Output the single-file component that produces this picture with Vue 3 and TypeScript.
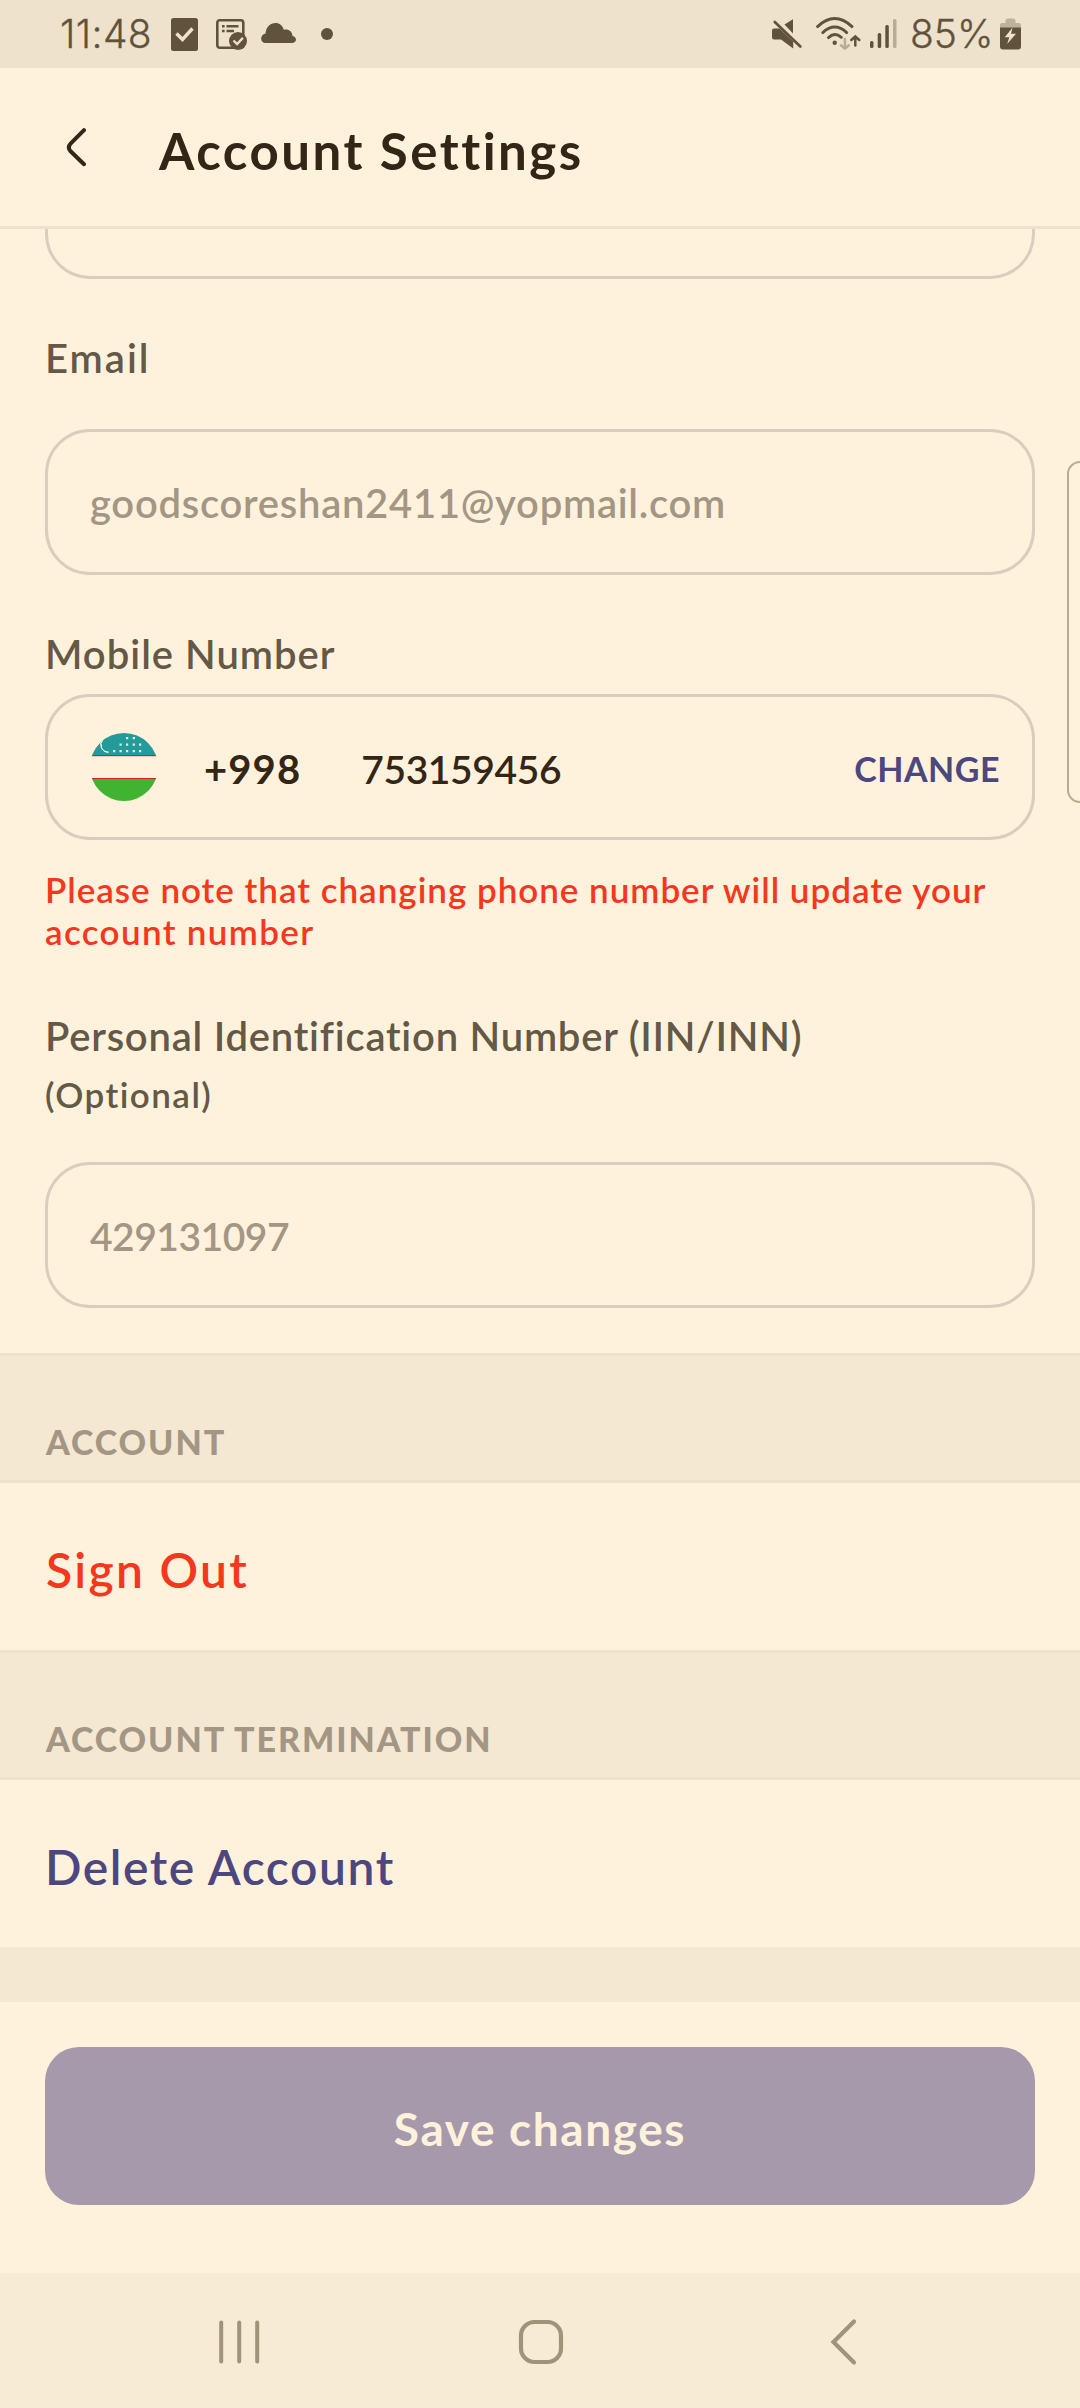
<script setup lang="ts">
const email = 'goodscoreshan2411@yopmail.com'
const phone = { code: '+998', number: '753159456' }
const pin = '429131097'

const signalBars = [
  { x: 0, h: 7, faded: false },
  { x: 7.7, h: 15, faded: false },
  { x: 15.3, h: 23, faded: false },
  { x: 23, h: 29, faded: true }
]

const flagStars = [
  [37, 5], [43.7, 5],
  [30.5, 11.5], [37, 11.5], [43.7, 11.5], [50, 11.5],
  [24, 18], [30.5, 18], [37, 18], [43.7, 18], [50, 18]
]
</script>

<template>
  <div class="screen">
    <div class="status">
      <span class="clock">11:48</span>
      <svg class="ic-check" width="27" height="33" viewBox="0 0 27 33">
        <rect width="27" height="33" rx="2.5" fill="#61533b" />
        <path d="M5.500 15.500L11.500 21.500L21.500 10.500" fill="none" stroke="#eee2cc" stroke-width="3.4" />
      </svg>
      <svg class="ic-list" width="31" height="31" viewBox="0 0 31 31">
        <rect x="1.3" y="1.3" width="26" height="27.5" rx="2.5" fill="none" stroke="#61533b" stroke-width="2.6" />
        <path d="M6 7.3h2.6M10.5 7.3h12M6 12h2.6M10.5 12h7.5" stroke="#61533b" stroke-width="2.5" />
        <circle cx="22" cy="22" r="9" fill="#61533b" />
        <path d="M17.500 21.500L21.100 25.100L26.900 18.900" fill="none" stroke="#eee2cc" stroke-width="2.3" />
      </svg>
      <svg class="ic-cloud" width="35" height="20" viewBox="0 0 35 20">
        <path d="M4 20C-1.200 19.500-1.200 11.500 4.500 10.500C5 4 9.500 0 14.500 0C18.500 0 21.500 2.300 22.800 6.800C27.500 5.800 31.300 8.500 31.500 12.900C36.300 13.800 36 19.600 31.500 20Z" fill="#61533b" />
      </svg>
      <i class="dot"></i>
      <span class="grow"></span>
      <svg class="ic-mute" width="30" height="30" viewBox="0 0 30 30">
        <path d="M12.500 5.500L21 .3V14.500ZM0 11.500Q0 9.500 2 9.500H7.500L21.200 22.500V29.500L9 20.500H2Q0 20.500 0 18Z" fill="#61533b" />
        <path d="M2.800 3L28.300 27.500" stroke="#61533b" stroke-width="2.700" stroke-linecap="round" />
      </svg>
      <svg class="ic-wifi" width="45" height="34" viewBox="0 0 45 34">
        <g fill="none" stroke="#61533b" stroke-width="2.900" stroke-linecap="round">
          <path d="M1.600 9.600Q18.700-6.400 36 9.600M6.800 15.600Q18.700 4.600 30.700 15.600M12.500 20.600Q18.700 14.700 25.300 20.300" />
          <path d="M39.300 28.500V20M35.300 23L39.300 19.500L43.300 23" stroke-width="2.500" />
          <path d="M28.900 22V31.500M24.900 28.300L28.900 31.700L32.900 28.300" stroke="#b8ac96" stroke-width="2.500" />
        </g>
        <circle cx="18.700" cy="25.700" r="2.200" fill="#61533b" />
      </svg>
      <svg class="ic-signal" width="27" height="29" viewBox="0 0 27 29">
        <rect v-for="b in signalBars" :key="b.x" :x="b.x" :y="29 - b.h" width="3.500" :height="b.h" rx="1.500" :fill="b.faded ? '#b8ac96' : '#61533b'" />
      </svg>
      <span class="percent">85%</span>
      <svg class="ic-battery" width="21" height="32" viewBox="0 0 21 32">
        <path d="M0 10V7Q0 5 2 5H5.500V3Q5.500 .5 8 .5H13Q15.500 .5 15.500 3V5H19Q21 5 21 7V10Z" fill="#beb29c" />
        <path d="M0 9.500H21V28.500Q21 31.500 18 31.500H3Q0 31.500 0 28.500Z" fill="#61533b" />
        <path d="M12.500 9.500L4.800 19.200H9.300L7.200 26L16 15.800H11Z" fill="#eee2cc" />
      </svg>
    </div>

    <header class="header">
      <svg class="back" width="20" height="39" viewBox="0 0 20 39">
        <path d="M18 2.200L4.600 15.700Q1 19.500 4.600 23.300L18 36.200" fill="none" stroke="#332617" stroke-width="4" stroke-linecap="round" />
      </svg>
      <h1 class="title">Account Settings</h1>
    </header>

    <main class="form">
      <div class="field clipped"></div>

      <label class="label email-label">Email</label>
      <div class="field"><span class="value email-value">{{ email }}</span></div>

      <label class="label mobile-label">Mobile Number</label>
      <div class="field phone">
        <svg class="flag" width="68" height="68" viewBox="0 0 68 68">
          <clipPath id="disc"><circle cx="34" cy="34" r="34" /></clipPath>
          <g clip-path="url(#disc)">
            <rect width="68" height="22" fill="#249b9b" />
            <rect y="22" width="68" height="1.200" fill="#d4202a" />
            <rect y="45" width="68" height="1.200" fill="#d4202a" />
            <rect y="46" width="68" height="22" fill="#40b330" />
            <path d="M14 6.500A8 7.500 0 0 0 19.500 19.200A7.500 7.500 0 0 1 14 6.500Z" fill="#fff2dc" stroke="#fff2dc" stroke-width="1" transform="translate(-1 0)" />
            <rect v-for="([x, y], i) in flagStars" :key="i" :x="x - 1" :y="y - 1" width="2.200" height="2.200" fill="#e8efe0" />
          </g>
        </svg>
        <span class="code">{{ phone.code }}</span>
        <span class="number">{{ phone.number }}</span>
        <span class="grow"></span>
        <button class="change" type="button">CHANGE</button>
      </div>
      <p class="warning"><span class="warning-first">Please note that changing phone number will update your</span><br /><span class="warning-rest">account number</span></p>

      <label class="label pin-label">Personal Identification Number (IIN/INN)</label>
      <span class="optional">(Optional)</span>
      <div class="field"><span class="value pin-value">{{ pin }}</span></div>
    </main>

    <h2 class="section">ACCOUNT</h2>
    <a class="row danger">Sign Out</a>
    <h2 class="section">ACCOUNT TERMINATION</h2>
    <a class="row link">Delete Account</a>
    <div class="gap"></div>

    <footer class="footer">
      <button class="save" type="button">Save changes</button>
    </footer>

    <nav class="nav">
      <svg class="recents" width="41" height="44" viewBox="0 0 41 44">
        <path d="M2.200 2.500V41.500M20.200 2.500V41.500M38.200 2.500V41.500" stroke="#a09379" stroke-width="4" stroke-linecap="round" />
      </svg>
      <svg class="home" width="46" height="46" viewBox="0 0 46 46">
        <rect x="3" y="3" width="40" height="40" rx="13.500" fill="none" stroke="#a09379" stroke-width="4.200" />
      </svg>
      <svg class="prev" width="28" height="48" viewBox="0 0 28 48">
        <path d="M24 3.500L3.500 24L24 44.500" fill="none" stroke="#a09379" stroke-width="4.200" stroke-linecap="round" />
      </svg>
    </nav>

    <i class="edge"></i>
  </div>
</template>

<style scoped>
.screen {
  position: relative;
  display: flex;
  flex-direction: column;
  width: 1080px;
  height: 2408px;
  overflow: hidden;
  background: #fff2dc;
  color: #332617;
  font-family: Lato, "Open Sans", sans-serif;
  font-weight: 600;
}
.grow { flex: 1; }
.status {
  display: flex;
  align-items: flex-start;
  height: 68px;
  background: #eee2cc;
  color: #61533b;
  font: 300 39px/68px Inter, Roboto, sans-serif;
  -webkit-text-stroke: 0.3px #61533b;
}
.status svg { display: block; flex: none; }
.clock { width: 111px; margin-left: 60px; letter-spacing: 0.4px; }
.ic-check { margin-top: 18px; }
.ic-list { margin: 19px 0 0 18px; }
.ic-cloud { margin: 23px 0 0 14px; }
.dot { width: 12px; height: 12px; margin: 28px 0 0 25px; border-radius: 50%; background: #61533b; }
.ic-mute { margin-top: 19px; }
.ic-wifi { margin: 17px 0 0 14px; }
.ic-signal { margin: 19px 0 0 9px; }
.percent { width: 90px; margin-left: 13px; }
.ic-battery { margin: 18px 59px 0 0; }

.header {
  display: flex;
  align-items: flex-start;
  height: 161px;
  border-bottom: 3px solid #eee2cc;
  box-sizing: border-box;
}
.back { margin: 60px 0 0 66px; }
.title {
  margin: 53px 0 0 73px;
  font-size: 51px;
  font-weight: 700;
  line-height: 60px;
  letter-spacing: 2.5px;
}

.form { display: flex; flex-direction: column; padding: 0 45px 45px; }
.field {
  display: flex;
  align-items: center;
  box-sizing: border-box;
  height: 146px;
  padding: 0 32px 0 42px;
  border: 3px solid #dbcdbd;
  border-radius: 45px;
}
.clipped { height: 50px; border-top: 0; border-radius: 0 0 45px 45px; }
.label { margin: 55px 0 47px; color: #645846; font-size: 40px; line-height: 48px; }
.email-label { letter-spacing: 2px; }
.mobile-label { margin-bottom: 16px; letter-spacing: 1px; }
.pin-label { margin: 60px 0 13px; letter-spacing: 0.77px; }
.value { padding-top: 2px; color: #a49684; font-size: 40px; }
.email-value { letter-spacing: 0.72px; }
.pin-value { font-size: 39px; letter-spacing: -0.5px; }
.flag { flex: none; }
.code { margin-left: 46px; padding-top: 3px; font-size: 40px; font-weight: 700; letter-spacing: 1.1px; }
.number { margin-left: 60px; padding-top: 3px; font-size: 39px; letter-spacing: -0.4px; }
button { border: 0; font-family: inherit; }
.change {
  padding: 2px 0 0;
  background: none;
  color: #4d477f;
  font-size: 34px;
  font-weight: 700;
  letter-spacing: 0.5px;
}
.warning { margin: 28px 0 0; color: #f5371e; font-size: 35px; line-height: 42px; white-space: nowrap; }
.warning-first { letter-spacing: 0.98px; }
.warning-rest { letter-spacing: 1.35px; }
.optional { margin-bottom: 47px; color: #645846; font-size: 35px; line-height: 42px; letter-spacing: 1.45px; }

.section {
  box-sizing: border-box;
  height: 130px;
  margin: 0;
  padding: 65px 46px 0;
  border: solid #eee2cc;
  border-width: 3px 0;
  background: #f4e8d2;
  color: #a49684;
  font-size: 34px;
  font-weight: 900;
  line-height: 42px;
  letter-spacing: 1.93px;
}
.row { display: flex; align-items: center; box-sizing: border-box; height: 167px; padding: 5px 46px 0; font-size: 48px; }
.danger { color: #f5371e; letter-spacing: 2.3px; }
.link { padding-left: 45px; color: #4d477f; letter-spacing: 1.57px; }
.gap { height: 55px; background: #f4e8d2; }
.footer { display: flex; height: 271px; padding: 45px; box-sizing: border-box; }
.save {
  flex: 1;
  height: 158px;
  padding: 5px 0 0;
  border-radius: 34px;
  background: #a699ab;
  color: #fff2dc;
  font-size: 46px;
  font-weight: 700;
  letter-spacing: 1.6px;
}
.nav { display: flex; align-items: center; height: 135px; padding-top: 3px; box-sizing: border-box; background: #f7ebd5; }
.recents { margin-left: 219px; }
.home { margin-left: 258px; }
.prev { margin-left: 266px; }
.edge {
  position: absolute;
  left: 1067px;
  top: 461px;
  width: 40px;
  height: 342px;
  box-sizing: border-box;
  border: 2px solid #b8ab91;
  border-radius: 13px;
}
</style>

<style>
body { margin: 0; }
</style>
